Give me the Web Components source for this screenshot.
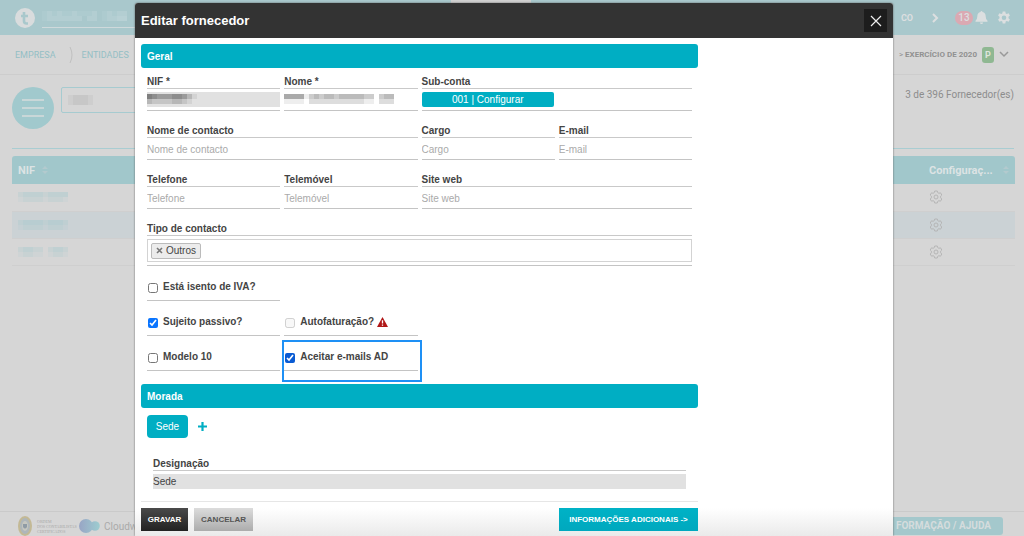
<!DOCTYPE html>
<html lang="pt">
<head>
<meta charset="utf-8">
<title>Editar fornecedor</title>
<style>
html, body { margin: 0; height: 100%; overflow: hidden; }
body { font-family: "Liberation Sans", Arial, sans-serif; font-size: 10px; color: #444; background: #d6d6d6; }
</style>
</head>
<body>
<supplier-app></supplier-app>
<script>
const define = (name, html, setup) => customElements.define(name, class extends HTMLElement {
  connectedCallback() {
    if (this.shadowRoot) return;
    this.attachShadow({ mode: 'open' }).innerHTML = typeof html === 'function' ? html(this) : html;
    if (setup) setup(this);
  }
});

/* Masked value: rows of mosaic blocks, one digit per block (0 = clear, 9 = solid) */
define('masked-value', el => {
  const rows = el.getAttribute('rows').split('|');
  const size = +(el.getAttribute('size') || 5);
  const color = el.getAttribute('color') || '#555';
  const w = Math.max(...rows.map(r => r.length)) * size, h = rows.length * size;
  let out = '';
  rows.forEach((r, y) => [...r].forEach((c, x) => {
    out += `<rect x="${x * size}" y="${y * size}" width="${size}" height="${size}" fill="${color}" fill-opacity="${c / 10}"/>`;
  }));
  return `<style>:host{display:block;line-height:0}svg{display:block}</style>
    <svg width="${w}" height="${h}" shape-rendering="crispEdges" aria-hidden="true">${out}</svg>`;
});

/* ---------- Page behind the dialog ---------- */
define('top-bar', `
<style>
:host { display: flex; align-items: center; height: 35px; padding: 0 13px 0 15px; background: #a9c8cc; color: #dcdfe0; font-family: Roboto, sans-serif; box-sizing: border-box; position: relative; }
.tab { position: absolute; top: 0; left: 44%; width: 80px; height: 8px; background: #d0d0d0; }
.logo { width: 20px; height: 20px; }
.search { margin-left: 7px; width: 160px; padding: 3px 0 6px; border-bottom: 1px solid #cfd9db; display: flex; align-items: center; }
.right { margin-left: auto; display: flex; align-items: center; font-weight: 700; font-size: 9px; }
.count { background: #dba9b2; border-radius: 7px; width: 18px; height: 14px; line-height: 14px; text-align: center; margin: 0 2px 0 16px; font-weight: 500; font-size: 10px; }
.next { margin-left: 18px; }
.gear { margin-left: 9px; }
svg { display: block; }
</style>
<div class="tab"></div>
<svg class="logo" viewBox="0 0 20 20"><circle cx="10" cy="10" r="10" fill="#d9dcdd"/><path d="M9 4v9q0 2.500 2.500 2.500h1.500M6 8h7" fill="none" stroke="#a9c8cc" stroke-width="2.600"/></svg>
<div class="search"><masked-value rows="12121121112012122|12222222022012233" size="5" color="#dce8ea"></masked-value></div>
<div class="right">
  <span>CO</span>
  <svg class="next" width="8" height="12" viewBox="0 0 8 12"><path d="M2 2l4 4-4 4" fill="none" stroke="#dcdfe0" stroke-width="2"/></svg>
  <span class="count">13</span>
  <svg width="13" height="15" viewBox="0 0 13 15"><path fill="#dcdfe0" d="M6.500 1q1 0 1 1Q10.700 2.800 10.700 6.500q0 2.900 1.800 4.200v1H.5v-1q1.800-1.300 1.800-4.200Q2.300 2.800 5.500 2q0-1 1-1zM4.900 12.500h3.200q-.2 1.500-1.600 1.500t-1.600-1.500z"/></svg>
  <svg class="gear" width="14" height="14" viewBox="0 0 14 14"><path fill="#dcdfe0" fill-rule="evenodd" d="M5.700.5h2.600l.4 1.900 1.100.6 1.800-.7 1.300 2.300-1.400 1.200v1.400l1.400 1.200-1.300 2.300-1.800-.7-1.100.6-.4 1.900H5.700l-.4-1.900-1.100-.6-1.800.7L1.100 8.400l1.400-1.200V5.800L1.100 4.600l1.300-2.300 1.800.7 1.100-.6zM7 4.400a2.300 2.300 0 100 4.600 2.300 2.300 0 000-4.600z"/></svg>
</div>`);

define('crumb-bar', `
<style>
:host { display: flex; align-items: center; height: 39px; padding: 0 15px; border-bottom: 1px solid #cdcdcd; font-family: Roboto, sans-serif; font-size: 9px; color: #999; }
a { color: #94bfc5; text-decoration: none; }
.sep { margin: 0 9px 0 13px; }
.year { margin-left: auto; font-weight: 700; font-size: 8px; display: flex; align-items: center; color: #919191; }
.gt { font-weight: 400; font-size: 8px; margin-right: 2px; }
.p { background: #8fb892; color: #dde5dd; width: 12px; height: 16px; line-height: 16px; border-radius: 3px; text-align: center; margin: 0 5px; font-size: 9px; }
svg { display: block; }
</style>
<a href="#">EMPRESA</a>
<svg class="sep" width="4" height="18" viewBox="0 0 4 18"><path d="M1 1q4 8 0 16" fill="none" stroke="#c0c0c0"/></svg>
<a href="#">ENTIDADES</a>
<div class="year"><span class="gt">&gt;</span><span>EXERCÍCIO DE 2020</span><span class="p">P</span>
<svg width="10" height="7" viewBox="0 0 10 7"><path d="M1 1l4 4 4-4" fill="none" stroke="#999" stroke-width="1.500"/></svg></div>`);

define('list-tools', `
<style>
:host { display: flex; align-items: flex-start; margin: 0 10px 0 12px; padding: 12px 0 19px; border-bottom: 1px solid #a9cdd2; font-family: Roboto, sans-serif; }
button { width: 42px; height: 42px; border: 0; border-radius: 50%; background: #a1c9cd; padding: 0; display: grid; place-items: center; }
.box { margin-left: 7px; width: 240px; height: 26px; border: 1px solid #a6cbd0; border-radius: 2px; display: flex; align-items: center; padding-left: 6px; box-sizing: border-box; }
.total { margin-left: auto; font-size: 10px; line-height: 16px; color: #8d8d8d; }
</style>
<button aria-label="Menu"><svg width="24" height="18" viewBox="0 0 24 18"><path d="M1 1h22M1 9h22M1 17h22" stroke="#d6dcdc" stroke-width="1.500"/></svg></button>
<div class="box"><masked-value rows="12221|12221" size="5" color="#8a8a8a"></masked-value></div>
<div class="total">3 de 396 Fornecedor(es)</div>`);

define('supplier-table', () => {
  const cog = `<svg width="14" height="14" viewBox="0 0 14 14"><g fill="none" stroke="#b2b2b2" stroke-width=".9"><path d="M5.700 1h2.600l.4 1.600 1.200.7 1.600-.5 1.300 2.200-1.200 1.200v1.600l1.200 1.200-1.300 2.200-1.600-.5-1.200.7-.4 1.600H5.700l-.4-1.600-1.200-.7-1.600.5L1.200 9l1.200-1.200V6.200L1.200 5l1.300-2.200 1.600.5 1.200-.7z"/><circle cx="7" cy="7" r="2"/></g></svg>`;
  const sort = `<svg width="6" height="8" viewBox="0 0 6 8"><path d="M0 3l3-3 3 3zM0 5l3 3 3-3z" fill="#b3cace"/></svg>`;
  const row = m => `<tr><td><masked-value rows="${m}" size="5" color="#8fc3ca"></masked-value></td><td class="c">${cog}</td></tr>`;
  return `<style>
:host { display: block; margin: 7px 9px 0 12px; font-family: Roboto, sans-serif; font-size: 10px; }
table { width: 100%; border-collapse: collapse; }
th { height: 28px; padding: 0 6px; box-sizing: border-box; background: #a1c7cb; color: #dce3e4; text-align: left; font-size: 11px; font-weight: 700; white-space: nowrap; }
th:first-child { border-radius: 3px 0 0 0; } th:last-child { border-radius: 0 3px 0 0; width: 92px; }
th svg { margin-left: 4px; } th:last-child svg { margin-left: 7px; }
td { height: 27px; padding: 0 6px; box-sizing: border-box; border-bottom: 1px solid #cfcfcf; }
tr:nth-child(2) td { background: #cbd2d5; }
.c svg { display: block; }
</style>
<table><thead><tr><th>NIF ${sort}</th><th>Configuraç... ${sort}</th></tr></thead>
<tbody>${row('2333323333|1222212221')}${row('2333323332|1222212221')}${row('2332202332|1221101221')}</tbody></table>`;
});

define('page-footer', `
<style>
:host { display: flex; align-items: center; margin-top: auto; height: 25px; padding: 0 21px 0 18px; border-top: 1px solid #cacaca; font-family: Roboto, sans-serif; color: #aaa; padding-top: 4px; box-sizing: border-box; }
.order { font-family: "Liberation Serif", serif; font-size: 4px; line-height: 5px; margin: 0 5px; color: #a8a8a8; text-transform: uppercase; white-space: nowrap; width: 36px; }
.cloud { font-size: 10px; margin-left: 4px; }
a { margin-left: auto; background: #a4c8cc; color: #d5dcdd; font-weight: 700; font-size: 10px; line-height: 18px; padding: 0 12px; border-radius: 3px; text-decoration: none; }
svg { display: block; }
</style>
<svg width="14" height="20" viewBox="0 0 14 20"><ellipse cx="7" cy="10" rx="6" ry="9" fill="#aeb6ba" stroke="#c3b995" stroke-width="2"/><ellipse cx="7" cy="10" rx="3" ry="5" fill="#c6c7c0"/><path d="M5 8h4v3q-2 3-4 0z" fill="#8f9ba5"/></svg>
<div class="order">Ordem<br>dos Contabilistas<br>Certificados</div>
<svg width="22" height="16" viewBox="0 0 22 16"><defs><linearGradient id="g" gradientUnits="userSpaceOnUse" x1="0" y1="0" x2="22" y2="0"><stop offset="0" stop-color="#98a3c4"/><stop offset="1" stop-color="#9dcdd0"/></linearGradient></defs><g fill="url(#g)"><circle cx="8" cy="8" r="7"/><circle cx="17" cy="8" r="4.800"/></g></svg>
<span class="cloud">Cloudware</span>
<a href="#">FORMAÇÃO / AJUDA</a>`);

/* ---------- Form parts ---------- */
define('section-bar', `
<style>:host { display: block; height: 24px; line-height: 26px; padding: 0 6px; border-radius: 3px; background: #00aec3; color: #fff; font-size: 10px; font-weight: 700; }</style>
<slot></slot>`);

define('form-field', el => {
  const label = el.getAttribute('label'), kind = el.getAttribute('kind') || 'text';
  const mask = el.getAttribute('mask'), value = el.getAttribute('value') || '';
  const control = {
    text: `<input id="c" type="text" placeholder="${mask || value ? '' : label}" value="${value}">${mask ? `<masked-value rows="${mask}" size="5"></masked-value>` : ''}`,
    button: `<button id="c" class="account">001 | Configurar</button>`,
    tags: `<div class="tags"><button class="tag"><svg width="7" height="7" viewBox="0 0 7 7"><path d="M1 1l5 5M6 1l-5 5" stroke="#777" stroke-width="1.600"/></svg>Outros</button><input id="c" type="text"></div>`
  }[kind];
  return `<style>
:host { display: block; grid-column: span 1; border-bottom: 1px solid #c4c4c4; }
:host([span="2"]) { grid-column: span 2; } :host([span="4"]) { grid-column: span 4; }
:host([plain]) { border: 0; }
label { display: block; height: 14px; line-height: 16px; font-weight: 700; border-bottom: 1px solid #c9c9c9; white-space: nowrap; }
.control { position: relative; padding: 3px 0; }
input { display: block; width: 100%; height: 15px; box-sizing: border-box; border: 0; padding: 1px 0 0; margin: 0; font: inherit; color: #444; background: transparent; outline: 0; }
input::placeholder { color: #aaa; opacity: 1; }
:host([filled]) input { background: #e1e1e1; }
:host([plain]) input { padding: 0; }
masked-value { position: absolute; left: 0; top: 5px; }
.account { display: block; width: 49%; height: 15px; border: 0; border-radius: 2px; padding: 0; background: #00aec3; color: #fff; font: inherit; }
.tags { display: flex; align-items: center; height: 23px; box-sizing: border-box; border: 1px solid #d3d3d3; padding: 0 3px; gap: 4px; }
.tag { display: flex; align-items: center; gap: 3px; height: 16px; padding: 0 4px; border: 1px solid #bbb; border-radius: 2px; background: #ececec; color: #444; font: inherit; }
.tags input { flex: 1; }
</style><label for="c">${label}</label><div class="control">${control}</div>`;
});

define('check-field', el => `
<style>
:host { display: flex; align-items: center; gap: 5px; grid-column: span 1; height: 22px; padding-left: 1px; border-bottom: 1px solid #c4c4c4; position: relative; }
input { margin: 0; width: 10px; height: 10px; align-self: flex-end; margin-bottom: 7px; accent-color: #0a75ff; }
label { font-weight: 700; line-height: 12px; margin-bottom: 5px; display: flex; align-items: center; gap: 3px; white-space: nowrap; }
svg { display: block; }
:host([marked]) input { accent-color: #0a5bd3; }
:host([marked])::after { content: ""; position: absolute; inset: -8px -4px -12px -2px; border: 2px solid #1e90f5; pointer-events: none; }
</style>
<input id="c" type="checkbox" ${el.hasAttribute('checked') ? 'checked' : ''} ${el.hasAttribute('disabled') ? 'disabled' : ''}>
<label for="c">${el.getAttribute('label')}${el.hasAttribute('warn') ? '<svg width="11" height="10" viewBox="0 0 11 10"><path d="M5.500 0L11 10H0z" fill="#b01717"/><path d="M5.500 3.300v3.200M5.500 7.400v1.300" stroke="#fff" stroke-width="1.300"/></svg>' : ''}</label>`);

define('edit-dialog', `
<style>
:host { position: absolute; inset: 3px 131px 0 135px; display: flex; flex-direction: column; background: #fff; border-radius: 3px 3px 0 0; box-shadow: 0 0 2px #555; overflow: hidden; }
header { display: flex; align-items: center; justify-content: space-between; height: 35px; padding: 0 6px; background: #333; color: #fff; flex: none; }
h1 { margin: 0; font-size: 13px; line-height: 16px; font-weight: 700; }
.close { width: 23px; height: 23px; border: 0; padding: 0; background: #1d1d1d; display: grid; place-items: center; }
main { flex: 1; padding: 6px 6px 0; min-height: 0; }
section { max-width: 557px; }
.grid { display: grid; grid-template-columns: repeat(4, minmax(0, 1fr)); gap: 12px 4px; padding: 6px 6px 13px; }
.start { grid-column: 1; }
.tabs { display: flex; align-items: center; gap: 10px; padding: 7px 6px 0; }
.tabs button { border: 0; font: inherit; padding: 0; }
.tabs .on { background: #00aec3; color: #fff; border-radius: 4px; width: 41px; height: 23px; }
.tabs .add { background: none; display: grid; place-items: center; width: 9px; height: 9px; }
.place { padding: 18px 12px 0; }
footer { flex: none; height: 35px; padding: 0 6px; background: linear-gradient(#fff 20%, #eaeaea); }
.actions { display: flex; gap: 6px; max-width: 557px; padding-top: 6px; border-top: 1px solid #e6e6e6; }
.actions button { height: 23px; border: 0; padding: 0 6px; font: 700 8px "Liberation Sans", Arial, sans-serif; color: #fff; min-width: 47px; white-space: nowrap; }
.actions .save { background: linear-gradient(#4a4a4a, #222); }
.actions .cancel { background: linear-gradient(#dcdcdc, #acacac); color: #555; min-width: 59px; }
.actions .more { margin-left: auto; background: linear-gradient(#00b2c6, #00a8be); min-width: 139px; }
</style>
<header><h1>Editar fornecedor</h1><button class="close" aria-label="Fechar"><svg width="12" height="12" viewBox="0 0 12 12"><path d="M1 1l10 10M11 1L1 11" stroke="#eee" stroke-width="1.200"/></svg></button></header>
<main>
  <section>
    <section-bar>Geral</section-bar>
    <div class="grid">
      <form-field label="NIF *" filled mask="7655566531|3222233210"></form-field>
      <form-field label="Nome *" mask="5555134344344444330344|1111022222222222110222"></form-field>
      <form-field label="Sub-conta" kind="button" span="2"></form-field>
      <form-field label="Nome de contacto" span="2"></form-field>
      <form-field label="Cargo"></form-field>
      <form-field label="E-mail"></form-field>
      <form-field label="Telefone"></form-field>
      <form-field label="Telemóvel"></form-field>
      <form-field label="Site web" span="2"></form-field>
      <form-field label="Tipo de contacto" kind="tags" span="4"></form-field>
      <check-field class="start" label="Está isento de IVA?"></check-field>
      <check-field class="start" label="Sujeito passivo?" checked></check-field>
      <check-field label="Autofaturação?" disabled warn></check-field>
      <check-field class="start" label="Modelo 10"></check-field>
      <check-field label="Aceitar e-mails AD" checked marked></check-field>
    </div>
  </section>
  <section>
    <section-bar>Morada</section-bar>
    <div class="tabs"><button class="on">Sede</button><button class="add" aria-label="Adicionar morada"><svg width="9" height="9" viewBox="0 0 9 9"><path d="M4.500 0v9M0 4.500h9" stroke="#00aec3" stroke-width="2.200"/></svg></button></div>
    <div class="place"><form-field label="Designação" value="Sede" filled plain></form-field></div>
  </section>
</main>
<footer><div class="actions"><button class="save">GRAVAR</button><button class="cancel">CANCELAR</button><button class="more">INFORMAÇÕES ADICIONAIS -&gt;</button></div></footer>`);

define('supplier-app', `
<style>:host { display: flex; flex-direction: column; height: 100vh; position: relative; overflow: hidden; }</style>
<top-bar></top-bar>
<crumb-bar></crumb-bar>
<list-tools></list-tools>
<supplier-table></supplier-table>
<page-footer></page-footer>
<edit-dialog></edit-dialog>`);
</script>
</body>
</html>
